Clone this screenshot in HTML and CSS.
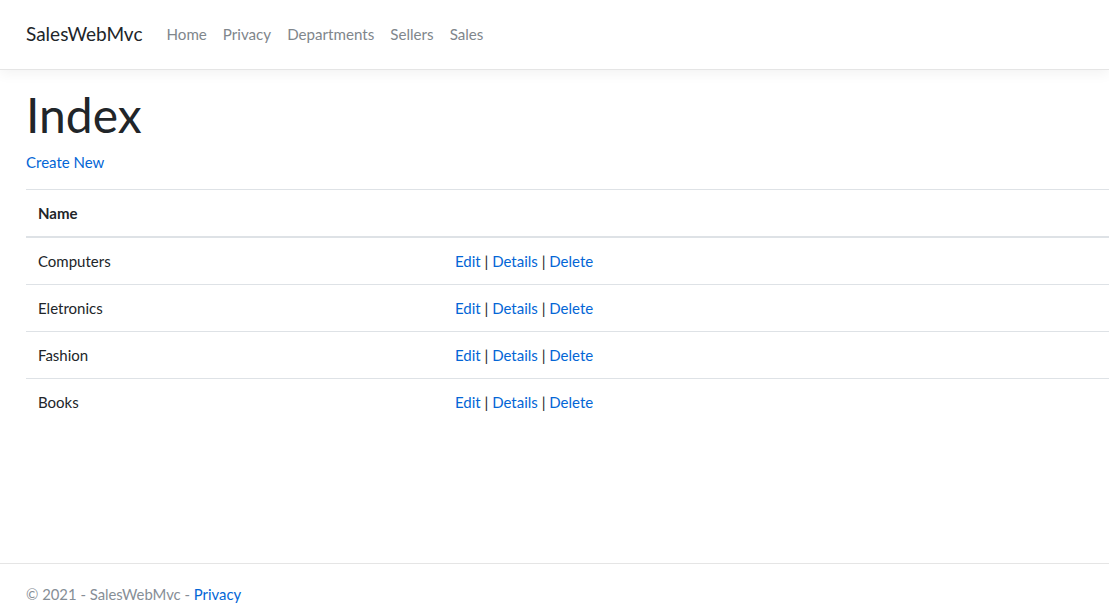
FILE: index.html
```html
<!DOCTYPE html>
<html lang="en">
<head>
<meta charset="utf-8">
<title>Index - SalesWebMvc</title>
<link rel="stylesheet" href="styles.css">
</head>
<body>
<header class="navbar">
  <a class="brand" href="#">SalesWebMvc</a>
  <nav class="nav">
    <a class="nav-link" href="#">Home</a>
    <a class="nav-link" href="#">Privacy</a>
    <a class="nav-link" href="#">Departments</a>
    <a class="nav-link" href="#">Sellers</a>
    <a class="nav-link" href="#">Sales</a>
  </nav>
</header>
<main class="main">
  <h1 class="title">Index</h1>
  <p class="create"><a href="#">Create New</a></p>
  <table class="table">
    <thead>
      <tr><th class="col-name">Name</th><th></th></tr>
    </thead>
    <tbody>
      <tr><td>Computers</td><td><a href="#">Edit</a> | <a href="#">Details</a> | <a href="#">Delete</a></td></tr>
      <tr><td>Eletronics</td><td><a href="#">Edit</a> | <a href="#">Details</a> | <a href="#">Delete</a></td></tr>
      <tr><td>Fashion</td><td><a href="#">Edit</a> | <a href="#">Details</a> | <a href="#">Delete</a></td></tr>
      <tr><td>Books</td><td><a href="#">Edit</a> | <a href="#">Details</a> | <a href="#">Delete</a></td></tr>
    </tbody>
  </table>
</main>
<footer class="footer">
  &copy; 2021 - SalesWebMvc - <a href="#">Privacy</a>
</footer>
</body>
</html>
```

FILE: styles.css
```css
* { box-sizing: border-box; }
html, body { margin: 0; padding: 0; }
body {
  font-family: Lato, "Liberation Sans", sans-serif;
  font-size: 15px;
  line-height: 1.5;
  color: #212529;
  background: #fff;
  height: 613px;
  display: flex;
  flex-direction: column;
  overflow: hidden;
}
a { color: #0366d6; text-decoration: none; }

.navbar {
  height: 70px;
  flex: none;
  display: flex;
  align-items: center;
  padding: 0 26px;
  border-bottom: 1px solid #e5e5e5;
  box-shadow: 0 4px 12px rgba(0,0,0,.05);
}
.brand {
  color: #212529;
  font-size: 19px;
  margin-right: 16px;
}
.nav { display: flex; }
.nav-link {
  color: #80868c;
  padding: 0 8px;
  font-size: 15.15px;
}

.main {
  flex: 1;
  padding: 0 0 0 26px;
}
.title {
  font-size: 48px;
  font-weight: 400;
  line-height: 1.2;
  margin: 16px 0 7px;
}
.create { margin: 0 0 16px; }

.table {
  width: 100%;
  border-collapse: collapse;
}
.table th, .table td {
  text-align: left;
  padding: 11.5px 12px 12px;
  border-top: 1px solid #dee2e6;
  vertical-align: top;
}
.table th { font-weight: 700; }
.table thead th { border-bottom: 2px solid #dee2e6; }
.col-name { width: 417px; }

.footer {
  flex: none;
  height: 50px;
  border-top: 1px solid #e5e5e5;
  padding: 19px 26px 0;
  color: #868e96;
  font-size: 14.85px;
}
```
